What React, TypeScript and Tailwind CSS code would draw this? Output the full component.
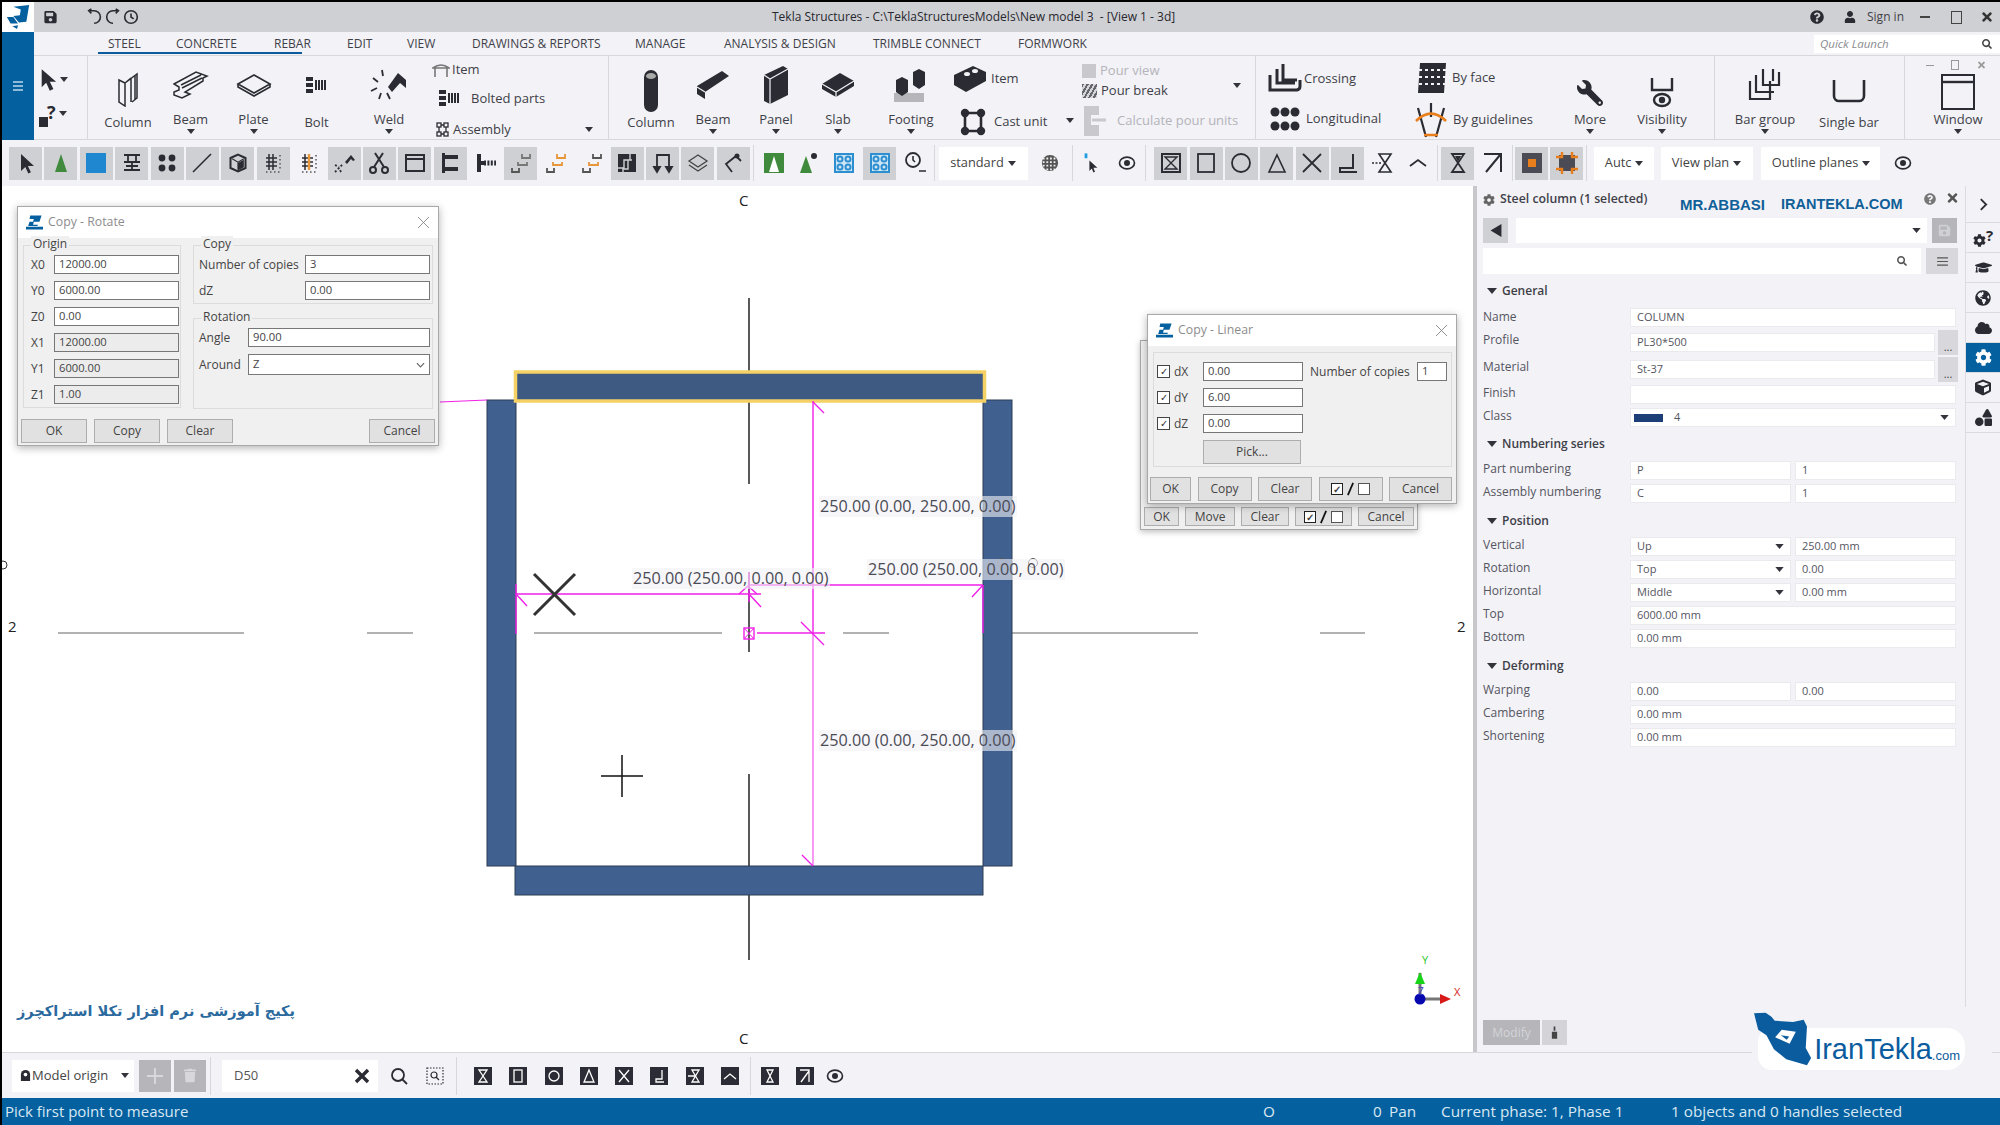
import type { ReactNode } from "react";
import clsx from "clsx";
import { FaCloud, FaCog, FaCube, FaGlobeAmericas, FaGraduationCap, FaQuestionCircle, FaSave, FaSearch, FaShapes, FaTimes, FaTrash, FaUser, FaWrench } from "react-icons/fa";

const DARK = "#2b2b33";

function Caret({ className }: { className?: string }) {
  return (
    <svg viewBox="0 0 10 6" className={clsx("w-[8px] h-[5px]", className)}>
      <polygon points="0,0 10,0 5,6" fill="#33333b" />
    </svg>
  );
}

function Ic({ children, w = 24, h = 24, vb = "0 0 24 24", sw = 2, stroke = DARK }: { children: ReactNode; w?: number; h?: number; vb?: string; sw?: number; stroke?: string }) {
  return (
    <svg viewBox={vb} width={w} height={h} fill="none" stroke={stroke} strokeWidth={sw}>
      {children}
    </svg>
  );
}

const f = { fill: DARK, stroke: "none" };

const cursor = <Ic><path {...f} d="M7 3v17l4.3-4 3 6.4 2.6-1.2-3-6.2H20z" /></Ic>;
const brackets = (c: string, top: string) => (
  <Ic sw={1.8}>
    <path stroke={top} d="M13 3v4h8V3M9 11v3h9v-3" />
    <path stroke={c} d="M3 17v4h7v-4" />
  </Ic>
);
const grid = (col = DARK) => (
  <Ic sw={1.5}>
    <path d="M8 3v16M5 7h11M5 11h11M5 15h11" />
    <path stroke={col} strokeWidth={col === DARK ? 1.5 : 2.4} d="M12 3v16" />
    <path stroke="#555" strokeDasharray="1.5 2.5" d="M19 4v14M5 21h14" />
  </Ic>
);
const blueGrid = (
  <Ic stroke="#2e8fd0" sw={2}>
    <rect x="3" y="3" width="18" height="18" fill="#cfe6f5" />
    <circle cx="8" cy="8" r="2.5" /><circle cx="16" cy="8" r="2.5" /><circle cx="8" cy="16" r="2.5" /><circle cx="16" cy="16" r="2.5" />
  </Ic>
);

const TOOLS_A: [boolean, ReactNode][] = [
  [true, cursor],
  [true, <Ic><polygon points="12,3 18,21 6,21" fill="#3f8a3c" stroke="none" /></Ic>],
  [true, <Ic w={20} h={20} vb="0 0 20 20"><rect width="20" height="20" fill="#1f87cf" stroke="none" /></Ic>],
  [true, <Ic sw={1.8}><path d="M4 4h16M4 11h16M4 19h16M8 4v7M16 4v7M12 11v8M6 15h12" /></Ic>],
  [true, <Ic><g {...f}><circle cx="7" cy="7" r="3.4" /><circle cx="17" cy="7" r="3.4" /><circle cx="7" cy="17" r="3.4" /><circle cx="17" cy="17" r="3.4" /></g></Ic>],
  [true, <Ic sw={1.6}><path d="M3 21L21 3" /></Ic>],
  [true, <Ic w={20} h={22}><path d="M12 2l9 4v12l-9 4-9-4V6z" fill="#cfd0d4" strokeWidth={2.4} /><path {...f} d="M12 12l7-4v9l-7 4z" /><path strokeWidth={1.4} d="M5 7l7 4 7-4M12 11v9" /></Ic>],
  [true, grid()],
  [false, grid("#e7963a")],
  [true, <Ic sw={1.8}><path {...f} d="M13 11l6-7 4 5-2 1-2-2-4 5z" /><path strokeDasharray="2 2" d="M3 21l8-8M3 14l4 2M9 21l-2-4" /></Ic>],
  [true, <Ic sw={2}><circle cx="6" cy="19" r="3" /><circle cx="18" cy="19" r="3" /><path d="M7 16L16 2M17 16L8 2" /></Ic>],
  [true, <Ic><rect x="3" y="4" width="18" height="16" /><path d="M3 8h18" /></Ic>],
  [true, <Ic><path {...f} d="M4 2h3v20H4zM7 4h13v4H7zM7 16h13v4H7z" /></Ic>],
  [false, <Ic><path {...f} d="M3 3h4v7h3v4H7v7H3z" /><path strokeDasharray="2 1.4" strokeWidth={5} d="M10 12h12" /></Ic>],
  [true, brackets("#555", "#777")],
  [false, brackets("#555", "#e7963a")],
  [false, <Ic sw={1.8}><path stroke="#555" d="M13 3v4h8V3" /><path stroke="#e7963a" d="M9 11v3h9v-3" /><path stroke="#555" d="M3 17v4h7v-4" /></Ic>],
  [true, <Ic><rect x="3" y="3" width="18" height="18" fill={DARK} stroke="none" /><path stroke="#cfd0d4" strokeWidth={1.4} d="M3 17h6V9h6V3M8 21v-3h5V9h4" /></Ic>],
  [true, <Ic sw={1.8}><path d="M6 18V4h12v14" /><path d="M3 16l3 5 3-5zM15 16l3 5 3-5z" fill={DARK} /></Ic>],
  [true, <Ic sw={1.3} stroke="#444"><path d="M12 4l9 6-9 6-9-6z" /><path d="M3 14l9 6 9-6" /></Ic>],
  [true, <Ic sw={1.8}><path d="M15 5L5 13l6 8M15 5l5 5" /><circle cx="16" cy="5" r="1.6" fill={DARK} /></Ic>],
];

const TOOLS_B: [boolean, ReactNode][] = [
  [false, <Ic><rect x="2" y="2" width="20" height="20" fill="#3f8a3c" stroke="none" /><polygon points="12,5 17,21 7,21" fill="#fff" stroke="none" /></Ic>],
  [false, <Ic><polygon points="9,5 15,22 3,22" fill="#3f8a3c" stroke="none" /><circle cx="17" cy="5" r="3" {...f} /></Ic>],
  [false, blueGrid],
  [true, blueGrid],
  [false, <Ic sw={1.8}><circle cx="10" cy="9" r="7" /><path d="M10 5v4l2 2M16 20h7" strokeWidth={1.6} /></Ic>],
];

const VIEW_TOOLS: [boolean, ReactNode][] = [
  [true, <Ic sw={2}><rect x="3" y="3" width="18" height="18" /><path d="M6 6h12L6 18h12z" strokeWidth={1.4} /></Ic>],
  [true, <Ic sw={1.8}><rect x="4" y="3" width="16" height="18" /></Ic>],
  [true, <Ic sw={1.8}><circle cx="12" cy="12" r="9" /></Ic>],
  [true, <Ic sw={1.6}><path d="M12 4l8 17H4z" /></Ic>],
  [true, <Ic sw={1.8}><path d="M3 3l18 18M21 3L3 21" /></Ic>],
  [true, <Ic sw={2}><path d="M17 3v14H4v4h17" /></Ic>],
  [false, <Ic sw={1.6}><path d="M8 3h12L8 21h12z" /><path strokeDasharray="2 1.5" d="M1 12h9" /></Ic>],
  [false, <Ic sw={1.8}><path d="M4 15l8-6 8 6" /></Ic>],
  [true, <Ic sw={1.8}><path d="M6 3h12L6 21h12z" /><path {...f} d="M9 5h6l-3 6z" /></Ic>],
  [false, <Ic sw={2}><path d="M3 3h17v18M19 4L5 21" /></Ic>],
  [true, <Ic><rect x="2" y="2" width="20" height="20" fill="#4b4b55" stroke="none" /><rect x="8" y="8" width="8" height="8" fill="#e97e1d" stroke="none" /></Ic>],
  [true, <Ic><rect x="4" y="4" width="16" height="16" fill="#4b4b55" stroke="none" /><path stroke="#e97e1d" strokeWidth={2.4} d="M1 6h6V1M23 6h-6V1M1 18h6v5M23 18h-6v5" /></Ic>],
];

const eye = (
  <Ic w={20} h={20} sw={2}>
    <ellipse cx="12" cy="12" rx="9" ry="7" />
    <circle cx="12" cy="12" r="2.6" fill={DARK} />
  </Ic>
);

function Tb({ on, children }: { on?: boolean; children: ReactNode }) {
  return <div className={clsx("w-[33px] h-[33px] mr-[2.4px] flex items-center justify-center shrink-0", on && "bg-[#cfd0d4]")}>{children}</div>;
}

function Sel({ w, text }: { w: string; text: string }) {
  return (
    <div className={clsx("h-[33px] bg-white flex items-center pl-[11px] text-[12.8px] text-[#444] shrink-0", w)}>
      <span className="whitespace-nowrap">{text}</span>
      <Caret className="ml-[4px] shrink-0" />
    </div>
  );
}

function Big({ w, label, caret, icon, drop }: { w: string; label: string; caret?: boolean; icon: ReactNode; drop?: string }) {
  return (
    <div className={clsx("flex flex-col items-center pt-[4px] shrink-0", w)}>
      <div className="h-[50px] flex items-center justify-center"><div className={clsx("flex", drop)}>{icon}</div></div>
      <span className={clsx("text-[13px] leading-[18px] text-[#3f3f48] whitespace-nowrap", !caret && "mt-[3px]")}>{label}</span>
      {caret && <Caret className="mt-[1px]" />}
    </div>
  );
}

function Small({ icon, text, gap = "ml-[4px]", dim, className }: { icon: ReactNode; text: string; gap?: string; dim?: boolean; className?: string }) {
  return (
    <div className={clsx("flex items-center h-[20px] whitespace-nowrap", className)}>
      {icon}
      <span className={clsx("text-[13px]", gap, dim ? "text-[#b4b4ba]" : "text-[#3f3f48]")}>{text}</span>
    </div>
  );
}

const boltIcon = (
  <svg viewBox="0 0 22 16" width="22" height="16">
    <path fill={DARK} d="M0 0h7v4H0zM0 6h7v4H0zM0 12h7v4H0z" />
    <path fill={DARK} d="M9 3h2v10H9zM12 3h2v10h-2zM15 3h2v10h-2zM18 3h2v10h-2z" />
  </svg>
);

const ribbonSteel = {
  column: <Ic w={24} h={36} vb="0 0 24 36" sw={1.5}><path d="M3 9l6 3v23l-6-4zM9 12l12-9v24l-5 4M15 7v24M19 4.500v24M9 12l6-5" /></Ic>,
  beam: <Ic w={36} h={28} vb="0 0 36 28" sw={1.5}><path d="M1 13L23 1l11 4-4 2 0 3-18 11 5 2-8 4-8-3 0-3 5-2 0-3zM9 17L29 7M8 14l20-10" /></Ic>,
  plate: <Ic w={36} h={24} vb="0 0 36 24" sw={1.6}><path d="M2 11L18 2l16 9-16 9zM2 11v3l16 9 16-9v-3" /></Ic>,
  weld: <Ic w={38} h={36} vb="0 0 38 36" sw={1.8}><path {...f} d="M18 20L28 6l8 7v8l-6-5-8 9z" /><path d="M3 11l5 4M12 3l1 6M1 24l6-3M9 32l2-6M20 32l-3-6" /></Ic>,
};

const ribbonConcrete = {
  column: <Ic w={16} h={44} vb="0 0 16 44"><rect x="1" y="1" width="14" height="42" rx="7" {...f} /><ellipse cx="8" cy="7" rx="5" ry="3" fill="#aaa" stroke="none" /></Ic>,
  beam: <Ic w={34} h={30} vb="0 0 34 30"><path {...f} d="M1 16L26 1l7 5-24 16v7l-8-5z" /><path stroke="#f2f2f7" strokeWidth={1.2} d="M1 17l8 5" /></Ic>,
  panel: <Ic w={26} h={40} vb="0 0 26 40"><path {...f} d="M1 10L20 1l5 3v26L7 39l-6-3z" /><path stroke="#f2f2f7" strokeWidth={1.2} d="M1 10l6 4v25M7 14L25 4" /></Ic>,
  slab: <Ic w={36} h={26} vb="0 0 36 26"><path {...f} d="M2 12L20 1l14 8v5L16 25 2 17z" /><path stroke="#f2f2f7" strokeWidth={1.2} d="M2 12l14 8 18-11M16 20v5" /></Ic>,
  footing: <Ic w={36} h={36} vb="0 0 36 36"><rect x="1" y="26" width="30" height="9" fill="#b5b5ba" stroke="none" /><path {...f} d="M3 13l6-3 6 3v12l-6 4-6-4zM20 5l6-3 6 3v13l-6 4-6-4z" /></Ic>,
  item: <Ic w={34} h={28} vb="0 0 34 28"><path {...f} d="M1 10L20 1l13 6v9L13 27 1 20z" /><ellipse cx="14" cy="9" rx="3" ry="2" fill="#f2f2f7" stroke="none" /><ellipse cx="22" cy="6" rx="3" ry="2" fill="#f2f2f7" stroke="none" /></Ic>,
  cast: <Ic w={26} h={28} vb="0 0 26 28" sw={2.6}><path d="M6 5h14M6 23h14M5 5v18M21 5v18" /><g {...f}><circle cx="5" cy="5" r="4.200" /><circle cx="21" cy="5" r="4.200" /><circle cx="5" cy="23" r="4.200" /><circle cx="21" cy="23" r="4.200" /></g></Ic>,
};

const ribbonRebar = {
  crossing: <Ic w={34} h={32} vb="0 0 34 32" sw={3}><path d="M15 1v16h14M2 12v15h27a4 4 0 0 0 3-4v-6M9 6v14h18" /></Ic>,
  longitudinal: <Ic w={30} h={26} vb="0 0 30 26"><g {...f}>{[5, 15, 25].map((x) => [6, 20].map((y) => <circle key={`${x}${y}`} cx={x} cy={y} r="4.500" />))}</g></Ic>,
  face: <Ic w={32} h={32} vb="0 0 32 32"><path {...f} d="M4 1h26l-2 30H2z" /><path stroke="#f2f2f7" strokeWidth={2} strokeDasharray="3 3" d="M3 8h27M3 15h27M3 22h27" /></Ic>,
  guide: <Ic w={36} h={36} vb="0 0 36 36" sw={2.2}><path d="M18 1v14M5 6l8 29M31 6l-8 29" /><path stroke="#e97e1d" strokeWidth={2.6} d="M3 19Q18 4 33 19M11 33h14" /></Ic>,
  vis: <Ic w={26} h={34} vb="0 0 26 34" sw={2.4}><path d="M3 2v12h20V2" /><ellipse cx="13" cy="24" rx="8" ry="6" /><circle cx="13" cy="24" r="2" fill={DARK} /></Ic>,
  group: <Ic w={36} h={36} vb="0 0 36 36" sw={2.2}><path d="M16 2v16h16V5M26 2v12M3 14v18h20V14M9 8v17h18" /></Ic>,
  single: <Ic w={36} h={26} vb="0 0 36 26" sw={2.6}><path d="M3 2v16a5 5 0 0 0 5 5h20a5 5 0 0 0 5-5V2" /></Ic>,
  window: <Ic w={34} h={36} vb="0 0 34 36" sw={2}><rect x="1" y="1" width="32" height="34" /><path d="M1 8h32" strokeWidth={2.4} /></Ic>,
};

const TABS: [string, string][] = [
  ["STEEL", "w-[68px]"],
  ["CONCRETE", "w-[98px]"],
  ["REBAR", "w-[73px]"],
  ["EDIT", "w-[60px]"],
  ["VIEW", "w-[65px]"],
  ["DRAWINGS & REPORTS", "w-[163px]"],
  ["MANAGE", "w-[89px]"],
  ["ANALYSIS & DESIGN", "w-[149px]"],
  ["TRIMBLE CONNECT", "w-[145px]"],
  ["FORMWORK", "w-[100px]"],
];

function Header() {
  return (
    <div className="flex shrink-0">
      <div className="w-[32px] flex flex-col">
        <div className="h-[30px] bg-white flex items-center justify-center">
          <svg viewBox="0 0 30 28" width="28" height="26">
            <path fill="#04609f" d="M10 3L27 1l-3 18-8 1-6-7 7-1 1-6zM3 14l7 0 5 7-8 0zM9 24l6-1-1 4z" />
          </svg>
        </div>
        <div className="h-[108px] bg-[#04609f] flex items-center justify-center">
          <svg viewBox="0 0 12 12" width="12" height="12"><path stroke="#bcd6ea" strokeWidth="1.6" d="M1 2h10M1 6h10M1 10h10" /></svg>
        </div>
      </div>
      <div className="flex-1 flex flex-col">
        <div className="h-[30px] bg-[#cfd0d4] flex items-center">
          <div className="w-[738px] shrink-0 flex items-center pl-[10px]">
            <FaSave className="text-[#2b2b33] w-[13px] h-[14px] mr-[27px]" />
            <svg viewBox="0 0 58 20" width="58" height="18" fill="none" stroke="#2b2b33" strokeWidth="1.8">
              <path d="M3 3h5a7 7 0 1 1 0 14M5 1L2 3l3 3" />
              <path d="M34 3h-5a7 7 0 1 0 0 14M32 1l3 2-3 3" />
              <circle cx="49" cy="10" r="7" />
              <path d="M49 6v4l3 2" />
            </svg>
          </div>
          <span className="text-[12px] text-[#27272e] whitespace-pre">Tekla Structures - C:\TeklaStructuresModels\New model 3  - [View 1 - 3d]</span>
          <div className="ml-auto flex items-center pr-[7px]">
            <FaQuestionCircle className="text-[#2b2b33] w-[14px] h-[14px] mr-[20px]" />
            <FaUser className="text-[#2b2b33] w-[12px] h-[12px] mr-[11px]" />
            <span className="text-[12px] text-[#3f3f48] mr-[16px]">Sign in</span>
            <div className="w-[10px] h-[1.5px] bg-[#444] mr-[21px]" />
            <div className="w-[11px] h-[13px] border border-[#444] mr-[19px]" />
            <FaTimes className="text-[#333] w-[12px] h-[14px]" />
          </div>
        </div>
        <div className="h-[24px] bg-[#f2f2f7] border-b border-[#d8d8dc] flex items-center relative pl-[74px] text-[12px] text-[#3f3f48]">
          {TABS.map(([t, w]) => <span key={t} className={clsx("whitespace-nowrap pt-[1px]", w)}>{t}</span>)}
          <div className="absolute left-[64px] top-[20px] w-[204px] h-[2px] bg-[#0a5c9c]" />
          <div className="ml-auto w-[186px] h-[18px] mt-[1px] bg-white flex items-center justify-between pl-[6px] pr-[8px]">
            <span className="italic text-[11.5px] text-[#8a8a90]">Quick Launch</span>
            <FaSearch className="w-[10px] h-[10px] text-[#444]" />
          </div>
        </div>
        <Ribbon />
      </div>
    </div>
  );
}

function Ribbon() {
  return (
    <div className="h-[84px] bg-[#f2f2f7] border-b border-[#d8d8dc] flex">
      <div className="w-[54px] border-r border-[#d8d8dc] shrink-0 flex flex-col justify-around py-[2px] pl-[5px]">
        <div className="flex items-center gap-[3px]"><svg viewBox="0 0 20 26" width="18" height="24"><path fill={DARK} d="M3 1v20l5-5 4 9 4-2-4-8h7z" /></svg><Caret className="w-[6px] h-[4px]" /></div>
        <div className="flex items-end gap-[3px]"><span className="flex items-end"><span className="w-[9px] h-[10px] bg-[#2b2b33] mb-[1px]" /><span className="text-[18px] font-bold leading-[20px] text-[#2b2b33] -ml-[1px] -mt-[10px] pb-[6px]">?</span></span><Caret className="w-[6px] h-[4px] mb-[12px]" /></div>
      </div>
      <div className="w-[521px] shrink-0 border-r border-[#d8d8dc] flex pl-[9px] relative">
        <Big w="w-[62px]" label="Column" icon={ribbonSteel.column} drop="mt-[8px]" />
        <Big w="w-[63px]" label="Beam" caret icon={ribbonSteel.beam} />
        <Big w="w-[63px]" label="Plate" caret icon={ribbonSteel.plate} />
        <Big w="w-[63px]" label="Bolt" icon={boltIcon} />
        <Big w="w-[82px]" label="Weld" caret icon={ribbonSteel.weld} />
        <div className="flex flex-col pt-[4px] gap-[9px]">
          <Small className="pl-[2px]" text="Item" icon={<Ic w={18} h={16} vb="0 0 18 16" sw={1.6} stroke="#777"><path d="M1 6q8-6 16 0H1zM3 6v9M15 6v9" /></Ic>} gap="ml-[2px]" />
          <Small className="pl-[9px]" text="Bolted parts" gap="ml-[10px]" icon={boltIcon} />
          <Small className="pl-[6px] mt-[3px]" text="Assembly" icon={<Ic w={13} h={15} vb="0 0 13 15" sw={1.3}><path d="M3 3h7M3 12h7M3 3v9M10 3v9" /><g fill="#f2f2f7"><rect x="1" y="1" width="4" height="4" /><rect x="8" y="1" width="4" height="4" /><rect x="1" y="10" width="4" height="4" /><rect x="8" y="10" width="4" height="4" /></g></Ic>} />
        </div>
        <Caret className="absolute right-[15px] top-[71px] w-[7px] h-[4px]" />
      </div>
      <div className="w-[647px] shrink-0 border-r border-[#d8d8dc] flex pl-[11px] relative">
        <Big w="w-[62px]" label="Column" icon={ribbonConcrete.column} drop="mt-[12px]" />
        <Big w="w-[62px]" label="Beam" caret icon={ribbonConcrete.beam} />
        <Big w="w-[64px]" label="Panel" caret icon={ribbonConcrete.panel} />
        <Big w="w-[60px]" label="Slab" caret icon={ribbonConcrete.slab} />
        <Big w="w-[86px]" label="Footing" caret icon={ribbonConcrete.footing} />
        <div className="w-[121px] shrink-0 flex flex-col pt-[11px] gap-[19px] relative">
          <Small text="Item" icon={ribbonConcrete.item} gap="ml-[4px]" className="h-[24px] -ml-[1px]" />
          <Small text="Cast unit" icon={ribbonConcrete.cast} gap="ml-[8px]" className="h-[24px] pl-[6px]" />
          <Caret className="absolute left-[112px] top-[62px] w-[6px] h-[4px]" />
        </div>
        <div className="flex flex-col pl-[7px] pt-[5px] relative flex-1">
          <Small dim text="Pour view" icon={<span className="w-[14px] h-[14px] bg-[#c8c8cd]" />} />
          <Small text="Pour break" icon={<span className="w-[15px] h-[14px] bg-[repeating-linear-gradient(120deg,#66666e_0,#66666e_2px,#d5d5d9_2px,#d5d5d9_4px)]" />} />
          <Small dim className="mt-[10px]" text="Calculate pour units" gap="ml-[7px]" icon={<Ic w={28} h={32} vb="0 0 28 32" stroke="#c8c8cd"><path fill="#c8c8cd" stroke="none" d="M2 1h15v9H9v10h8v11H2z" /><path d="M10 15h14" strokeWidth={3} /></Ic>} />
          <Caret className="absolute left-[158px] top-[27px] w-[7px] h-[4px]" />
        </div>
      </div>
      <div className="w-[459px] shrink-0 border-r border-[#d8d8dc] flex relative">
        <div className="w-[164px] shrink-0 flex flex-col pl-[12px] pt-[7px] gap-[8px]">
          <Small text="Crossing" gap="ml-[2px]" className="h-[32px]" icon={ribbonRebar.crossing} />
          <Small text="Longitudinal" gap="ml-[6px]" className="h-[32px] pl-[2px]" icon={ribbonRebar.longitudinal} />
        </div>
        <div className="w-[135px] shrink-0 flex flex-col pt-[6px] gap-[9px]">
          <Small text="By face" className="h-[32px] -ml-[4px]" gap="ml-[4px]" icon={ribbonRebar.face} />
          <Small text="By guidelines" className="h-[34px] -ml-[7px]" gap="ml-[4px]" icon={ribbonRebar.guide} />
        </div>
        <Big w="w-[70px]" label="More" caret drop="mt-[16px]" icon={<FaWrench className="w-[26px] h-[26px] text-[#2b2b33] -scale-x-100" />} />
        <Big w="w-[74px]" label="Visibility" caret drop="mt-[16px]" icon={ribbonRebar.vis} />
      </div>
      <div className="w-[190px] shrink-0 border-r border-[#d8d8dc] flex">
        <Big w="w-[100px]" label="Bar group" caret icon={ribbonRebar.group} />
        <Big w="w-[68px]" label="Single bar" drop="mt-[12px]" icon={ribbonRebar.single} />
      </div>
      <div className="relative flex-1 pl-[16px]">
        <Big w="w-[74px]" label="Window" caret drop="mt-[14px]" icon={ribbonRebar.window} />
        <div className="absolute left-[21px] top-[4px] flex items-center">
          <span className="w-[8px] h-[1px] bg-[#999] mr-[17px]" />
          <span className="w-[8px] h-[10px] border border-[#999] mr-[18px]" />
          <FaTimes className="w-[9px] h-[10px] text-[#999]" />
        </div>
      </div>
    </div>
  );
}

function Toolbar() {
  return (
    <div className="h-[46px] bg-[#f2f2f7] flex items-center pl-[7px] shrink-0">
      {TOOLS_A.map(([on, i], n) => <Tb key={n} on={on}>{i}</Tb>)}
      <div className="w-[1px] h-[36px] bg-[#d8d8dc] mr-[3px] ml-[1px]" />
      {TOOLS_B.map(([on, i], n) => <Tb key={n} on={on}>{i}</Tb>)}
      <div className="w-[1px] h-[36px] bg-[#d8d8dc] mr-[4px]" />
      <Sel w="w-[89px]" text="standard" />
      <div className="w-[44px] flex justify-center">
        <svg viewBox="0 0 20 20" width="18" height="20"><circle cx="10" cy="10" r="9" fill="#555" /><path stroke="#eee" strokeWidth="2" strokeDasharray="2 2" d="M2 5h16M2 9h16M2 13h16M2 17h16" /></svg>
      </div>
      <div className="w-[1px] h-[36px] bg-[#d8d8dc]" />
      <div className="w-[36px] flex justify-center">
        <svg viewBox="0 0 20 26" width="16" height="22"><rect x="2" y="1" width="3.500" height="6" fill="#1f9fe0" /><path fill={DARK} d="M8 10v13l3-3 2 5 2-1-2-5h5z" /></svg>
      </div>
      <div className="w-[36px] flex justify-center">{eye}</div>
      <div className="w-[1px] h-[36px] bg-[#d8d8dc] mr-[8px]" />
      {VIEW_TOOLS.slice(0, 8).map(([on, i], n) => <Tb key={n} on={on}>{i}</Tb>)}
      <div className="w-[1px] h-[36px] bg-[#d8d8dc] mr-[3px]" />
      {VIEW_TOOLS.slice(8, 10).map(([on, i], n) => <Tb key={n} on={on}>{i}</Tb>)}
      <div className="w-[1px] h-[36px] bg-[#d8d8dc] mr-[2px]" />
      {VIEW_TOOLS.slice(10).map(([on, i], n) => <Tb key={n} on={on}>{i}</Tb>)}
      <div className="w-[1px] h-[36px] bg-[#d8d8dc] mr-[7px]" />
      <Sel w="w-[60px] mr-[7px]" text="Autc" />
      <Sel w="w-[92px] mr-[8px]" text="View plan" />
      <Sel w="w-[119px]" text="Outline planes" />
      <div className="w-[46px] flex justify-center">{eye}</div>
    </div>
  );
}

function TeklaMark() {
  return (
    <svg viewBox="0 0 24 20" width="17" height="15">
      <path fill="#04609f" d="M6 0h16l-3 9H11l-1 4h7l-1 2H3l2-6h5l1-4H5zM0 16h24v4H0z" />
    </svg>
  );
}

function Win({ title, className, children }: { title: string; className: string; children: ReactNode }) {
  return (
    <div className={clsx("absolute bg-[#f0f0f0] border border-[#a8a8a8] shadow-[0_2px_8px_rgba(0,0,0,0.3)] flex flex-col text-[12px] text-[#444]", className)}>
      <div className="h-[31px] bg-white flex items-center pl-[8px] pr-[5px] shrink-0">
        <TeklaMark />
        <span className="ml-[5px] text-[#8d8d8d] text-[12.300px]">{title}</span>
        <svg viewBox="0 0 12 12" width="11" height="11" className="ml-auto mr-[4px]"><path stroke="#888" strokeWidth="1" d="M0 0l12 12M12 0L0 12" /></svg>
      </div>
      {children}
    </div>
  );
}

function Field({ v, w, gray }: { v: string; w: string; gray?: boolean }) {
  return <div className={clsx("h-[19px] border border-[#777] flex items-center pl-[4px] shrink-0 text-[11.200px]", gray ? "bg-[#ececec]" : "bg-white", w)}>{v}</div>;
}

function Btn({ t, w, className }: { t: ReactNode; w: string; className?: string }) {
  return <div className={clsx("h-[24px] bg-[#e1e1e1] border border-[#adadad] flex items-center justify-center shrink-0", w, className)}>{t}</div>;
}

const legendCls = "absolute -top-[10px] left-[7px] bg-[#f0f0f0] px-[2px] leading-[16px]";
const Toggle = (
  <span className="flex items-center gap-[3px]">
    <span className="w-[12px] h-[12px] border border-[#222] bg-white text-[10px] leading-[10px] text-center font-bold">✓</span>
    <svg viewBox="0 0 10 16" width="9" height="14"><path d="M8 1L2 15" stroke="#111" strokeWidth="2" /></svg>
    <span className="w-[12px] h-[12px] border border-[#555] bg-white" />
  </span>
);

function CopyRotate() {
  const rows: [string, string, boolean][] = [
    ["X0", "12000.00", false], ["Y0", "6000.00", false], ["Z0", "0.00", false],
    ["X1", "12000.00", true], ["Y1", "6000.00", true], ["Z1", "1.00", true],
  ];
  return (
    <Win title="Copy - Rotate" className="left-[15px] top-[20px] w-[422px] h-[240px]">
      <div className="flex pl-[5px] pt-[7px] gap-[12px]">
        <div className="relative w-[158px] h-[163px] border border-[#dcdcdc] pt-[9px] pl-[7px] flex flex-col gap-[7px]">
          <span className={legendCls}>Origin</span>
          {rows.map(([l, v, g]) => (
            <div key={l} className="flex items-center">
              <span className="w-[23px]">{l}</span>
              <Field v={v} w="w-[125px]" gray={g} />
            </div>
          ))}
        </div>
        <div className="flex flex-col gap-[14px]">
          <div className="relative w-[240px] h-[59px] border border-[#dcdcdc] pt-[9px] pl-[5px] flex flex-col gap-[7px]">
            <span className={legendCls}>Copy</span>
            <div className="flex items-center"><span className="w-[106px] whitespace-nowrap">Number of copies</span><Field v="3" w="w-[125px]" /></div>
            <div className="flex items-center"><span className="w-[106px]">dZ</span><Field v="0.00" w="w-[125px]" /></div>
          </div>
          <div className="relative w-[240px] h-[91px] border border-[#dcdcdc] pt-[9px] pl-[5px] flex flex-col gap-[7px]">
            <span className={legendCls}>Rotation</span>
            <div className="flex items-center"><span className="w-[49px]">Angle</span><Field v="90.00" w="w-[182px]" /></div>
            <div className="flex items-center">
              <span className="w-[49px]">Around</span>
              <div className="w-[182px] h-[21px] border border-[#777] bg-white flex items-center justify-between pl-[4px] pr-[4px] text-[11.200px]">
                Z
                <svg viewBox="0 0 10 6" width="9" height="6"><path d="M1 1l4 4 4-4" fill="none" stroke="#666" strokeWidth="1.300" /></svg>
              </div>
            </div>
          </div>
        </div>
      </div>
      <div className="flex px-[3px] mt-[10px] gap-[7px]">
        <Btn t="OK" w="w-[66px]" />
        <Btn t="Copy" w="w-[66px]" />
        <Btn t="Clear" w="w-[66px]" />
        <Btn t="Cancel" w="w-[66px]" className="ml-auto" />
      </div>
    </Win>
  );
}

function CopyLinear() {
  return (
    <>
      <div className="absolute left-[1138px] top-[154px] w-[278px] h-[190px] bg-[#f0f0f0] border border-[#a8a8a8] shadow-[0_2px_6px_rgba(0,0,0,0.25)] flex items-end pb-[3px] pl-[3px] gap-[6px] text-[12px] text-[#444]">
        <div className="h-[19px] w-[35px] bg-[#e1e1e1] border border-[#adadad] flex items-center justify-center">OK</div>
        <div className="h-[19px] w-[50px] bg-[#e1e1e1] border border-[#adadad] flex items-center justify-center">Move</div>
        <div className="h-[19px] w-[48px] bg-[#e1e1e1] border border-[#adadad] flex items-center justify-center">Clear</div>
        <div className="h-[19px] w-[57px] bg-[#e1e1e1] border border-[#adadad] flex items-center justify-center">{Toggle}</div>
        <div className="h-[19px] w-[56px] bg-[#e1e1e1] border border-[#adadad] flex items-center justify-center">Cancel</div>
      </div>
      <Win title="Copy - Linear" className="left-[1145px] top-[128px] w-[310px] h-[190px]">
        <div className="relative ml-[5px] mt-[6px] w-[299px] h-[115px] border border-[#dcdcdc] pt-[9px] pl-[3px] flex flex-col gap-[7px]">
          {[["dX", "0.00"], ["dY", "6.00"], ["dZ", "0.00"]].map(([l, v], i) => (
            <div key={l} className="flex items-center h-[19px]">
              <span className="w-[13px] h-[13px] border border-[#444] bg-white text-[10px] leading-[11px] text-center text-[#333]">✓</span>
              <span className="ml-[4px] w-[29px]">{l}</span>
              <Field v={v} w="w-[100px]" />
              {i === 0 && <span className="ml-[7px] w-[107px] whitespace-nowrap">Number of copies</span>}
              {i === 0 && <Field v="1" w="w-[30px]" />}
            </div>
          ))}
          <Btn t="Pick..." w="w-[98px] ml-[46px] h-[23px]" />
        </div>
        <div className="flex pl-[2px] mt-[10px] gap-[6.500px]">
          <Btn t="OK" w="w-[41px]" />
          <Btn t="Copy" w="w-[54px]" />
          <Btn t="Clear" w="w-[54px]" />
          <Btn t={Toggle} w="w-[64px]" />
          <Btn t="Cancel" w="w-[63px]" />
        </div>
      </Win>
    </>
  );
}

function Model() {
  const PINK = "#f020e8";
  return (
    <svg className="absolute inset-0" width="1471" height="866" viewBox="2 186 1471 866" fill="none">
      {/* grid lines */}
      <path stroke="#000" strokeWidth="1.300" d="M749 298v186M749 572v80M749 774v92M749 894v66" />
      <path stroke="#999" strokeWidth="1.500" d="M58 633h186M367 633h46M534 633h188M843 633h46M1012 633h186M1320 633h45" />
      {/* plates */}
      <g fill="#406090" stroke="#2d3d55" strokeWidth="1">
        <rect x="487" y="400" width="29" height="466" />
        <rect x="983" y="400" width="29" height="466" />
        <rect x="515" y="866" width="468" height="29" />
      </g>
      <rect x="515.500" y="372" width="469" height="29" fill="#3f5a82" stroke="#f5d165" strokeWidth="3.500" />
      <path stroke={PINK} strokeWidth="1" d="M440 402L487 400" />
      {/* measure lines */}
      <g stroke={PINK} strokeWidth="1.400">
        <path d="M813 401v232" />
        <path d="M813 633v233" strokeOpacity="0.45" strokeWidth="2" />
        <path d="M516 594h245M749 585h234M757 633h68" />
        <path d="M516 584v50M983 585v48" />
        <path d="M516 594l11 12M813 402l11 11M983 585l-11 12M813 866l-11-11" />
        <path d="M739 594l9-8 9 8M749 594l12 13M749 572v30M801 622l23 23" />
        <rect x="744" y="628" width="10" height="11" />
        <path d="M744 628l10 11M754 628l-10 11" strokeWidth="1" />
      </g>
      {/* picked point marks */}
      <path stroke="#333" strokeWidth="3" d="M534 574l41 41M575 574l-41 41" />
      <path stroke="#111" strokeWidth="1.500" d="M601 776h42M622 755v42" />
      <circle cx="1002" cy="563" r="4.500" stroke="#555" />
      <circle cx="1033" cy="563" r="4.500" stroke="#555" />
      <circle cx="3" cy="565" r="4" stroke="#333" />
      {/* axis */}
      <path stroke="#777" strokeWidth="3" d="M1420 999v-26M1420 999h24" />
      <polygon points="1420,972 1415,984 1425,984" fill="#17d417" />
      <polygon points="1451,999 1440,994 1440,1004" fill="#d81a1a" />
      <circle cx="1420" cy="999" r="5.500" fill="#0707b0" />
    </svg>
  );
}

const labelCls = "absolute h-[21px] flex items-center px-[1px] text-[16.200px] text-[#4b4b55] bg-[#f2f2f7]/60 whitespace-nowrap";

function Canvas() {
  return (
    <div className="relative w-[1471px] h-[866px] bg-white shrink-0 overflow-hidden">
      <Model />
      <span className={clsx(labelCls, "left-[817px] top-[310px]")}>250.00 (0.00, 250.00, 0.00)</span>
      <span className={clsx(labelCls, "left-[817px] top-[544px]")}>250.00 (0.00, 250.00, 0.00)</span>
      <span className={clsx(labelCls, "left-[630px] top-[382px]")}>250.00 (250.00, 0.00, 0.00)</span>
      <span className={clsx(labelCls, "left-[865px] top-[373px]")}>250.00 (250.00, 0.00, 0.00)</span>
      <span className="absolute left-[737px] top-[3px] text-[15px] text-[#222]">C</span>
      <span className="absolute left-[737px] top-[841px] text-[15px] text-[#222]">C</span>
      <span className="absolute left-[6px] top-[429px] text-[15px] text-[#222]">2</span>
      <span className="absolute left-[1455px] top-[429px] text-[15px] text-[#222]">2</span>
      <span className="absolute left-[1420px] top-[766px] text-[11px] text-[#1fc41f]">Y</span>
      <span className="absolute left-[1452px] top-[798px] text-[11px] text-[#d81a1a]">X</span>
      <span className="absolute left-[1416px] top-[798px] text-[10px] text-[#3b3bc0]">Z</span>
      <span dir="rtl" className="absolute left-[13px] top-[815px] w-[280px] text-[14.500px] font-bold font-['DejaVu_Sans',sans-serif] text-[#2b6a9e] whitespace-nowrap">پکیج آموزشی نرم افزار تکلا استراکچرز</span>
      <CopyRotate />
      <CopyLinear />
    </div>
  );
}

function Inp({ v, w = "flex-1", caret, color }: { v?: string; w?: string; caret?: boolean; color?: boolean }) {
  return (
    <div className={clsx("h-[19px] bg-white border border-[#e9e9ee] flex items-center pl-[6px] pr-[6px] text-[11px] text-[#55555f]", w)}>
      {color && <span className="w-[29px] h-[8px] bg-[#1c3f78] -ml-[3px] mr-[11px]" />}
      {v}
      {caret && <Caret className="ml-auto w-[9px] h-[5px]" />}
    </div>
  );
}

function Row({ label, mt, lift = "-mt-[3px]", children }: { label: string; mt: string; lift?: string; children: ReactNode }) {
  return (
    <div className={clsx("flex items-center h-[19px]", mt)}>
      <span className={clsx("w-[147px] shrink-0 text-[12px] text-[#55555f] whitespace-nowrap", lift)}>{label}</span>
      {children}
    </div>
  );
}

function Section({ title, mt }: { title: string; mt: string }) {
  return (
    <div className={clsx("flex items-center h-[18px] pl-[4px]", mt)}>
      <Caret className="w-[10px] h-[8px]" />
      <span className="ml-[5px] text-[12px] font-semibold text-[#3f3f48]">{title}</span>
    </div>
  );
}

const Dots = <div className="w-[20px] h-[25px] bg-[#d8d8dc] ml-[3px] shrink-0 flex items-end justify-center text-[11px] leading-[16px] text-[#444]">...</div>;

function PropertyPanel() {
  return (
    <div className="w-[488px] bg-[#f2f2f7] shrink-0 pl-[6px] pr-[7px] relative">
      <div className="flex items-center h-[32px] relative">
        <FaCog className="w-[12px] h-[12px] text-[#666] mb-[5px]" />
        <span className="ml-[5px] w-[180px] mb-[5px] text-[12.300px] font-semibold text-[#3f3f48] whitespace-nowrap">Steel column (1 selected)</span>
        <span className="w-[101px] mt-[6px] text-[15px] font-bold text-[#0f5f98] font-['Liberation_Sans',sans-serif] whitespace-nowrap">MR.ABBASI</span>
        <span className="mt-[6px] text-[14.500px] font-bold text-[#0f5f98] font-['Liberation_Sans',sans-serif] whitespace-nowrap">IRANTEKLA.COM</span>
        <FaQuestionCircle className="absolute left-[441px] top-[7px] w-[12px] h-[12px] text-[#777]" />
        <FaTimes className="absolute left-[463px] top-[5px] w-[13px] h-[14px] text-[#555]" />
      </div>
      <div className="flex h-[25px]">
        <div className="w-[25px] bg-[#cfd0d4] flex items-center justify-center"><svg viewBox="0 0 10 12" width="12" height="13"><polygon points="0,6 10,0 10,12" fill="#2b2b33" /></svg></div>
        <div className="w-[411px] ml-[8px] bg-white flex items-center justify-end pr-[6px]"><Caret className="w-[9px] h-[5px]" /></div>
        <div className="w-[25px] ml-[5px] bg-[#b5b5ba] flex items-center justify-center"><FaSave className="w-[13px] h-[13px] text-[#cfd0d4]" /></div>
      </div>
      <div className="flex h-[26px] mt-[5px]">
        <div className="w-[438px] bg-white flex items-center justify-end pr-[14px]"><FaSearch className="w-[10px] h-[10px] text-[#555]" /></div>
        <div className="w-[32px] ml-[5px] bg-[#d8d8dc] flex items-center justify-center">
          <svg viewBox="0 0 12 10" width="11" height="9"><path stroke="#555" strokeWidth="1.300" d="M0 1h12M0 5h12M0 9h12" /></svg>
        </div>
      </div>
      <Section title="General" mt="mt-[8px]" />
      <Row label="Name" mt="mt-[8px]" lift="-mt-[2px]"><Inp v="COLUMN" w="w-[326px]" /></Row>
      <Row label="Profile" mt="mt-[6px]" lift="-mt-[5px]"><Inp v="PL30*500" w="w-[305px]" />{Dots}</Row>
      <Row label="Material" mt="mt-[8px]" lift="-mt-[5px]"><Inp v="St-37" w="w-[305px]" />{Dots}</Row>
      <Row label="Finish" mt="mt-[6px]"><Inp w="w-[326px]" /></Row>
      <Row label="Class" mt="mt-[4px]"><Inp v="4" w="w-[326px]" caret color /></Row>
      <Section title="Numbering series" mt="mt-[8px]" />
      <Row label="Part numbering" mt="mt-[8px]" lift="-mt-[3px]"><Inp v="P" w="w-[161px]" /><Inp v="1" w="w-[161px] ml-[4px]" /></Row>
      <Row label="Assembly numbering" mt="mt-[4px]" lift="-mt-[3px]"><Inp v="C" w="w-[161px]" /><Inp v="1" w="w-[161px] ml-[4px]" /></Row>
      <Section title="Position" mt="mt-[9px]" />
      <Row label="Vertical" mt="mt-[7px]"><Inp v="Up" w="w-[161px]" caret /><Inp v="250.00 mm" w="w-[161px] ml-[4px]" /></Row>
      <Row label="Rotation" mt="mt-[4px]"><Inp v="Top" w="w-[161px]" caret /><Inp v="0.00" w="w-[161px] ml-[4px]" /></Row>
      <Row label="Horizontal" mt="mt-[4px]"><Inp v="Middle" w="w-[161px]" caret /><Inp v="0.00 mm" w="w-[161px] ml-[4px]" /></Row>
      <Row label="Top" mt="mt-[4px]"><Inp v="6000.00 mm" w="w-[326px]" /></Row>
      <Row label="Bottom" mt="mt-[4px]"><Inp v="0.00 mm" w="w-[326px]" /></Row>
      <Section title="Deforming" mt="mt-[9px]" />
      <Row label="Warping" mt="mt-[7px]"><Inp v="0.00" w="w-[161px]" /><Inp v="0.00" w="w-[161px] ml-[4px]" /></Row>
      <Row label="Cambering" mt="mt-[4px]"><Inp v="0.00 mm" w="w-[326px]" /></Row>
      <Row label="Shortening" mt="mt-[4px]"><Inp v="0.00 mm" w="w-[326px]" /></Row>
      <div className="absolute left-[6px] top-[834px] flex gap-[2px]">
        <div className="w-[57px] h-[25px] bg-[#b5b5ba] flex items-center justify-center text-[12px] text-[#d4d4d8]">Modify</div>
        <div className="w-[25px] h-[25px] bg-[#d4d4d8] flex items-center justify-center">
          <svg viewBox="0 0 8 14" width="7" height="13"><path fill="#444" d="M3 0h2v5H3zM1 6h6v8H1z" /></svg>
        </div>
      </div>
    </div>
  );
}

function SideTabs() {
  const items = [
    <span key="a" className="flex items-center"><FaCog className="w-[13px] h-[13px] text-[#2b2b33] mt-[5px]" /><span className="text-[15px] leading-[15px] font-bold text-[#2b2b33] -mt-[5px]">?</span></span>,
    <FaGraduationCap key="b" className="w-[17px] h-[15px] text-[#2b2b33]" />,
    <FaGlobeAmericas key="c" className="w-[16px] h-[16px] text-[#2b2b33]" />,
    <FaCloud key="d" className="w-[17px] h-[14px] text-[#2b2b33]" />,
    <FaCog key="e" className="w-[17px] h-[17px] text-white" />,
    <FaCube key="f" className="w-[16px] h-[17px] text-[#2b2b33]" />,
    <FaShapes key="g" className="w-[17px] h-[17px] text-[#2b2b33]" />,
  ];
  return (
    <div className="flex-1 bg-[#f2f2f7] border-l border-[#dcdce0]">
      <div className="h-[37px] flex items-center justify-center border-b border-[#dcdce0]">
        <svg viewBox="0 0 10 14" width="9" height="13"><path d="M2 1l6 6-6 6" fill="none" stroke="#2b2b33" strokeWidth="2" /></svg>
      </div>
      {items.map((it, i) => (
        <div key={i} className={clsx("h-[30px] flex items-center justify-center border-b border-[#dcdce0]", i === 4 && "bg-[#04609f]")}>{it}</div>
      ))}
    </div>
  );
}

function BottomBar() {
  const box = (d: ReactNode) => (
    <svg viewBox="0 0 18 18" width="18" height="18" className="shrink-0">
      <rect width="18" height="18" fill="#2c2c36" />
      <g fill="none" stroke="#fff" strokeWidth="1.300">{d}</g>
    </svg>
  );
  const glyphs = [
    <path d="M5 3h8L5 15h8z" key="0" />,
    <rect x="5" y="3" width="8" height="12" key="1" />,
    <circle cx="9" cy="9" r="5" key="2" />,
    <path d="M9 3l5 12H4z" key="3" />,
    <path d="M4 3l10 12M14 3L4 15" key="4" />,
    <path d="M12 3v9H6v3h8" key="5" />,
    <path d="M6 3h7L6 15h7zM2 9h7" key="6" />,
    <path d="M3 12l6-5 6 5" key="7" />,
  ];
  return (
    <div className="h-[46px] bg-[#f2f2f7] border-t border-[#d8d8dc] flex items-center pl-[10px] shrink-0">
      <div className="w-[122px] h-[32px] bg-white flex items-center pl-[8px] pr-[5px] text-[13px] text-[#444] whitespace-nowrap">
        <svg viewBox="0 0 12 14" width="11" height="13" className="mr-[1px] shrink-0"><path fill={DARK} d="M6 1a5 5 0 0 1 5 5v7H1V6a5 5 0 0 1 5-5z" /><circle cx="6" cy="6" r="2" fill="#fff" /></svg>Model origin<Caret className="ml-auto" />
      </div>
      <div className="w-[32px] h-[32px] ml-[5px] bg-[#b5b5ba] flex items-center justify-center text-[#d8d8dc]">
        <svg viewBox="0 0 18 18" width="18" height="18"><path stroke="#d8d8dc" strokeWidth="2" d="M9 1v16M1 9h16" /></svg>
      </div>
      <div className="w-[32px] h-[32px] ml-[3px] bg-[#b5b5ba] flex items-center justify-center"><FaTrash className="w-[12px] h-[15px] text-[#d8d8dc]" /></div>
      <div className="w-[1px] h-[38px] bg-[#d8d8dc] ml-[4px]" />
      <div className="w-[156px] h-[32px] ml-[11px] bg-white flex items-center pl-[12px] pr-[8px] text-[13px] text-[#555]">
        D50
        <svg viewBox="0 0 16 16" width="16" height="16" className="ml-auto"><path d="M2 2l12 12M14 2L2 14" stroke="#2b2b33" strokeWidth="3.400" /></svg>
      </div>
      <svg viewBox="0 0 18 18" width="18" height="18" fill="none" stroke="#2b2b33" strokeWidth="1.800" className="ml-[12px]"><circle cx="8" cy="8" r="6" /><path d="M12 12l5 5" /></svg>
      <svg viewBox="0 0 18 18" width="18" height="18" fill="none" stroke="#2b2b33" strokeWidth="1.200" className="ml-[18px]"><rect x="1" y="1" width="16" height="16" strokeDasharray="1.500 1.500" /><circle cx="8" cy="8" r="3" /><path d="M10 10l3 3" /></svg>
      <div className="w-[1px] h-[38px] bg-[#d8d8dc] ml-[12px]" />
      <div className="flex items-center ml-[17px] gap-[17.300px]">
        {glyphs.map((g) => <span key={g.key}>{box(g)}</span>)}
      </div>
      <div className="w-[1px] h-[38px] bg-[#d8d8dc] ml-[11px]" />
      <div className="flex items-center ml-[10px] gap-[17px]">
        {box(<path d="M6 3h6L6 15h6z" />)}
        {box(<path d="M4 3h9v12M13 4L5 15" />)}
      </div>
      <div className="ml-[11px]">{eye}</div>
    </div>
  );
}

function StatusBar() {
  return (
    <div className="h-[27px] bg-[#04609f] flex items-center text-[15.300px] text-[#d9e8f3] whitespace-nowrap shrink-0">
      <span className="w-[1261px] pl-[3px] text-[15px]">Pick first point to measure</span>
      <span className="w-[110px]">O</span>
      <span className="w-[16px]">0</span>
      <span className="w-[52px]">Pan</span>
      <span className="w-[230px]">Current phase: 1, Phase 1</span>
      <span>1 objects and 0 handles selected</span>
    </div>
  );
}

function Logo() {
  return (
    <div className="absolute left-[1750px] top-[1005px] w-[240px] h-[70px] rounded-[20px] bg-[#f2f2f7]">
      <div className="absolute left-[6px] top-[21px] w-[207px] h-[42px] rounded-l-[14px] rounded-r-[18px] bg-white flex items-center justify-end pr-[5px]">
        <span className="text-[29px] leading-[30px] text-[#0b5c9e] font-['Liberation_Sans',sans-serif]">IranTekla</span>
        <span className="text-[13px] leading-[14px] mt-[14px] text-[#0b5c9e] font-['Liberation_Sans',sans-serif]">.com</span>
      </div>
      <svg viewBox="965 175 150 170" width="62" height="57" preserveAspectRatio="none" className="absolute left-[0px] top-[3px]">
        <path fill="#0b5c9e" d="M970 185l28-2 14 12 8 12 44 4 26-7 8 20-3 64 13 30-10 22-50-18-30-30-18-42-20-16z" />
        <path fill="#fff" d="M1021 256l16-22 34 6-15 36z" />
        <path fill="#0b5c9e" d="M1035 250l20 4-6 10z" />
      </svg>
    </div>
  );
}

export default function App() {
  return (
    <div className="relative w-[2000px] h-[1125px] overflow-hidden bg-[#f2f2f7] border-l-2 border-t-2 border-black flex flex-col font-['Open_Sans',sans-serif]">
      <Header />
      <Toolbar />
      <div className="flex h-[866px] shrink-0">
        <Canvas />
        <div className="w-[4px] bg-[#c8c8cc] shrink-0" />
        <PropertyPanel />
        <SideTabs />
      </div>
      <BottomBar />
      <StatusBar />
      <Logo />
    </div>
  );
}
